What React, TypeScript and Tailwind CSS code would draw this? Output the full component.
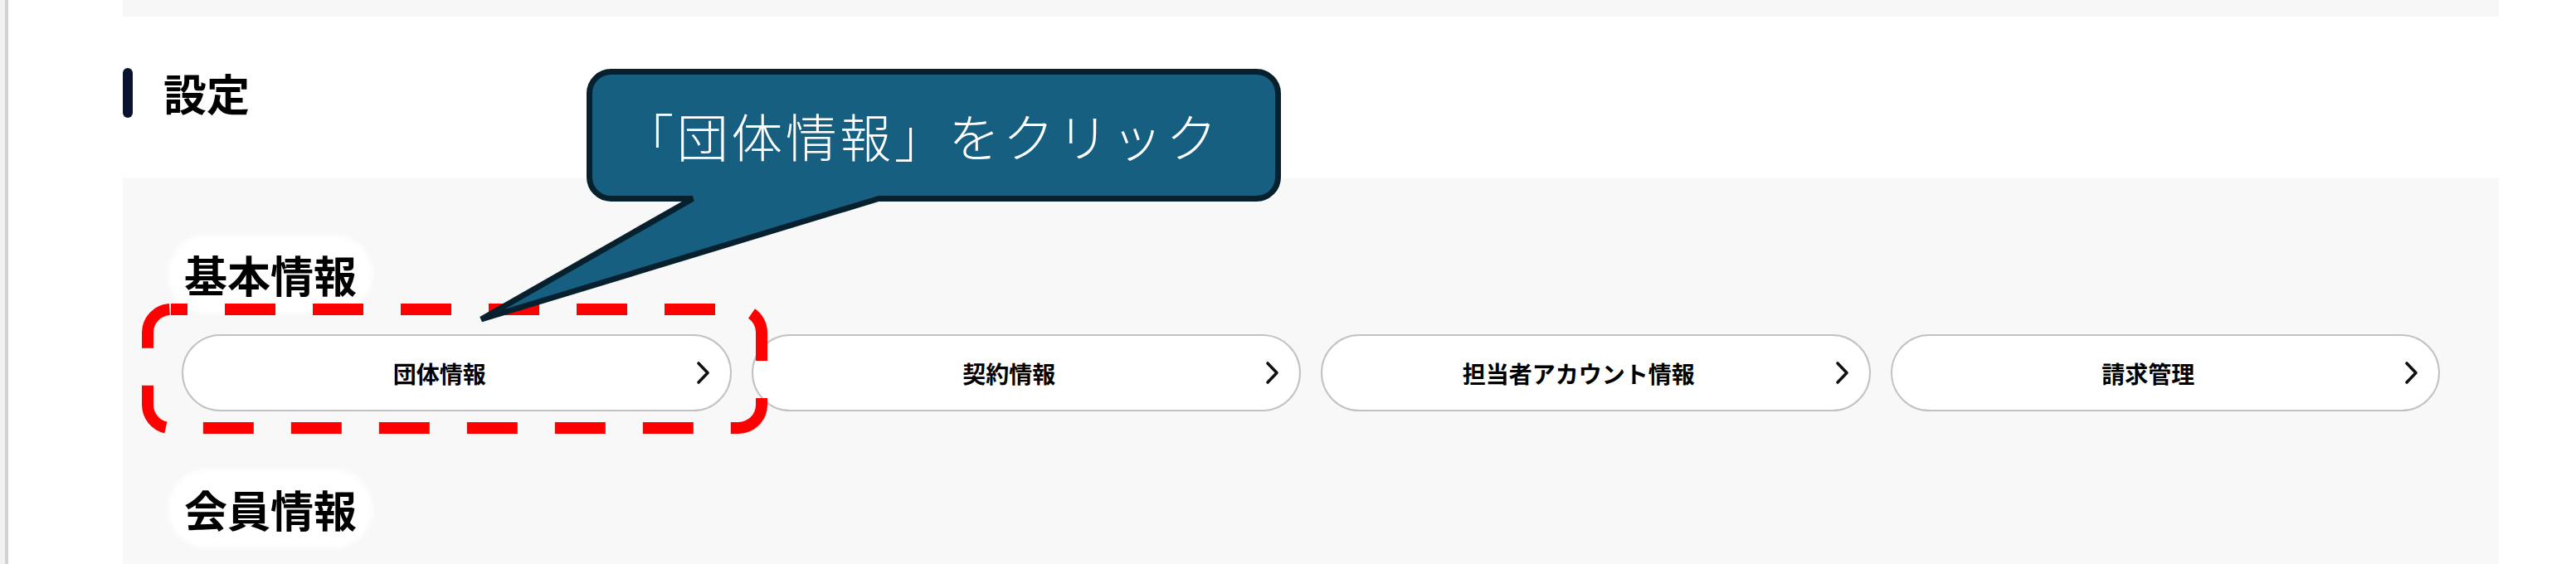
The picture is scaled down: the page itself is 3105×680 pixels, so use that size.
import React from "react";

const items = ["団体情報", "契約情報", "担当者アカウント情報", "請求管理"];

const Chevron = () => (
  <svg width="17" height="29" viewBox="0 0 17 29" fill="none" className="shrink-0">
    <path
      d="M3 3l11 11.5L3 26"
      stroke="#111"
      strokeWidth={3.6}
      strokeLinecap="round"
      strokeLinejoin="round"
    />
  </svg>
);

const SectionLabel = ({ text }: { text: string }) => (
  <div className="-ml-[12px] inline-flex h-[87px] items-center rounded-[44px] bg-white px-[15px] shadow-[0_0_6px_4px_#ffffff]">
    <span className="text-[52px] font-bold leading-none text-black">{text}</span>
  </div>
);

const LinkButton = ({ label }: { label: string }) => (
  <button className="flex h-[93px] items-center rounded-full border-2 border-[#c2c2c2] bg-white pr-[24px]">
    <span className="flex-1 text-center text-[28px] font-bold leading-none text-black">
      {label}
    </span>
    <Chevron />
  </button>
);

export default function App() {
  return (
    <div
      className="relative flex h-[680px] w-[3105px] overflow-hidden bg-white"
      style={{ fontFamily: '"Noto Sans CJK JP", "Noto Sans", sans-serif' }}
    >
      {/* left edge of window */}
      <div className="w-[6px] shrink-0 bg-[#f1f1f1]" />
      <div className="w-[4px] shrink-0 bg-[#d2d2d2]" />

      <div className="ml-[138px] flex w-[2864px] flex-col">
        {/* previous card bottom */}
        <div className="h-[20px] bg-[#f7f7f7]" />

        {/* heading */}
        <div className="mt-[62px] flex h-[60px] items-center">
          <div className="h-[60px] w-[12px] rounded-full bg-[#0b1230]" />
          <h2 className="ml-[37px] text-[52px] font-bold leading-none text-black">設定</h2>
        </div>

        {/* settings panel */}
        <div className="mt-[73px] flex-1 bg-[#f8f8f8] px-[71px] pt-[72px]">
          <SectionLabel text="基本情報" />
          <div className="mt-[29px] grid grid-cols-4 gap-[24px]">
            {items.map((item) => (
              <LinkButton key={item} label={item} />
            ))}
          </div>
          <div className="mt-[74px]">
            <SectionLabel text="会員情報" />
          </div>
        </div>
      </div>

      {/* annotation: red dashed frame + callout */}
      <svg
        className="pointer-events-none absolute left-0 top-0"
        width="3105"
        height="680"
        viewBox="0 0 3105 680"
        fill="none"
      >
        <rect
          x="178"
          y="373"
          width="740"
          height="143"
          rx="28"
          stroke="#ff0000"
          strokeWidth="14"
          strokeDasharray="61 45"
          strokeDashoffset="41"
        />
        <path
          d="M736.5 86.5H1514.5A26 26 0 0 1 1540.5 112.5V213.5A26 26 0 0 1 1514.5 239.5H1059L580 385L835 239.5H736.5A26 26 0 0 1 710.5 213.5V112.5A26 26 0 0 1 736.5 86.5Z"
          fill="#175f80"
          stroke="#06202e"
          strokeWidth="7"
          strokeLinejoin="bevel"
        />
      </svg>
      <div className="pointer-events-none absolute left-[707px] top-[83px] flex h-[160px] w-[837px] items-center justify-center pr-[30px]">
        <span className="text-[62px] font-light leading-none tracking-[3.5px] text-white">
          「団体情報」をクリック
        </span>
      </div>
    </div>
  );
}
